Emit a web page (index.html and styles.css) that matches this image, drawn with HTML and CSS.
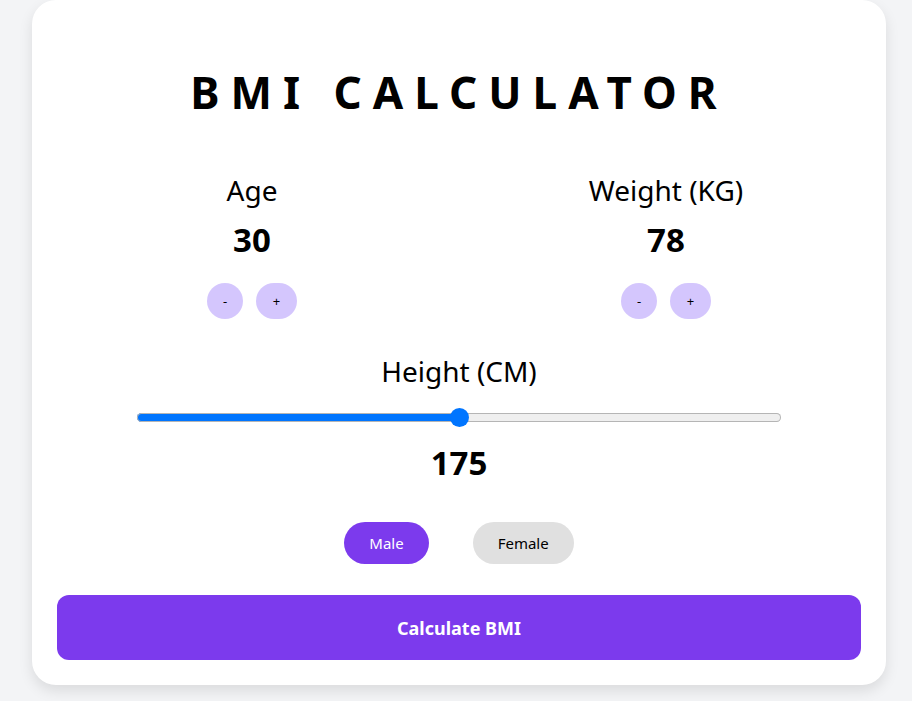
FILE: index.html
```html
<!DOCTYPE html>
<html lang="en">
<head>
<meta charset="utf-8">
<title>BMI Calculator</title>
<link rel="stylesheet" href="styles.css">
</head>
<body>
<main class="card">
  <h1 class="title">BMI CALCULATOR</h1>
  <section class="pair">
    <div class="field">
      <div class="label">Age</div>
      <div class="value">30</div>
      <div class="steppers">
        <button class="step step-minus">-</button>
        <button class="step step-plus">+</button>
      </div>
    </div>
    <div class="field">
      <div class="label">Weight (KG)</div>
      <div class="value">78</div>
      <div class="steppers">
        <button class="step step-minus">-</button>
        <button class="step step-plus">+</button>
      </div>
    </div>
  </section>
  <section class="height">
    <div class="label">Height (CM)</div>
    <input class="slider" type="range" min="100" max="250" value="175">
    <div class="value value-height">175</div>
  </section>
  <section class="genders">
    <button class="gender gender-active">Male</button>
    <button class="gender">Female</button>
  </section>
  <button class="calc">Calculate BMI</button>
</main>
</body>
</html>
```
FILE: styles.css
```css
* { box-sizing: border-box; }
body {
  margin: 0;
  background: #f3f4f6;
  font-family: "Noto Sans", "Open Sans", sans-serif;
  color: #000;
}
.card {
  width: 854px;
  margin: 0 0 16px 32px;
  background: #fff;
  border-radius: 24px;
  padding: 24px 25px 25px;
  box-shadow: 0 6px 14px rgba(0, 0, 0, 0.1);
}
.title {
  margin: 40px 0 52px;
  font-size: 44px;
  line-height: 57px;
  font-weight: 700;
  letter-spacing: 11px;
  text-align: center;
}
.pair {
  display: grid;
  grid-template-columns: 1fr 1fr;
  column-gap: 24px;
}
.field, .height {
  display: flex;
  flex-direction: column;
  align-items: center;
}
.label {
  font-size: 28px;
  line-height: 35px;
}
.value {
  font-size: 33px;
  line-height: 40px;
  font-weight: 700;
  margin-top: 12px;
}
.steppers {
  display: flex;
  gap: 13px;
  margin-top: 23px;
}
.step {
  height: 36px;
  border: none;
  border-radius: 18px;
  background: #d4c6fd;
  color: #000;
  font-family: inherit;
  font-size: 13px;
}
.step-minus { width: 36px; padding: 0; }
.step-plus { width: 41px; padding: 0; }
.height { margin-top: 35px; }
.slider {
  -webkit-appearance: none;
  appearance: none;
  width: 80%;
  height: 20px;
  margin: 18px 0 0;
  background: transparent;
}
.slider::-webkit-slider-runnable-track {
  height: 9px;
  border-radius: 5px;
  background: linear-gradient(to right, #0075ff 50%, #efefef 50%);
  box-shadow: inset 0 0 0 1px #b5b5b5;
}
.slider::-webkit-slider-thumb {
  -webkit-appearance: none;
  width: 19px;
  height: 19px;
  margin-top: -5px;
  border-radius: 50%;
  background: #0075ff;
  border: none;
}
.value-height { margin-top: 16px; }
.genders {
  display: flex;
  justify-content: center;
  gap: 44px;
  margin-top: 39px;
}
.gender {
  height: 42px;
  padding: 0 25px;
  border: none;
  border-radius: 21px;
  background: #e0e0e0;
  color: #000;
  font-family: inherit;
  font-size: 15px;
}
.gender-active {
  background: #7c3aed;
  color: #fff;
}
.calc {
  display: block;
  width: 100%;
  height: 65px;
  margin-top: 31px;
  border: none;
  border-radius: 12px;
  background: #7c3aed;
  color: #fff;
  font-family: inherit;
  font-size: 18px;
  font-weight: 700;
}
```
